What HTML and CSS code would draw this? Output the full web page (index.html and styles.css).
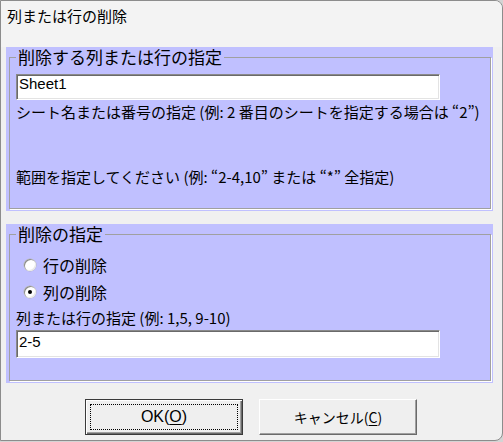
FILE: index.html
```html
<!DOCTYPE html>
<html lang="ja">
<head>
<meta charset="utf-8">
<title>列または行の削除</title>
<link rel="stylesheet" href="styles.css">
</head>
<body>
<div class="window">
  <div class="titlebar">列または行の削除</div>
  <div class="client">
    <div class="group g1">
      <fieldset class="frame">
        <legend>削除する列または行の指定</legend>
        <div class="input in1">Sheet1</div>
        <p class="note n1">シート名または番号の指定 (例: 2 番目のシートを指定する場合は “2”)</p>
        <p class="note n2">範囲を指定してください (例: “2-4,10” または “*” 全指定)</p>
      </fieldset>
    </div>
    <div class="group g2">
      <fieldset class="frame">
        <legend>削除の指定</legend>
        <div class="radio-row r1"><span class="radio"></span><span class="rlabel">行の削除</span></div>
        <div class="radio-row r2"><span class="radio checked"></span><span class="rlabel">列の削除</span></div>
        <p class="note n3">列または行の指定 (例: 1,5, 9-10)</p>
        <div class="input in2">2-5</div>
      </fieldset>
    </div>
    <div class="buttons">
      <div class="btn default"><span class="focus">OK(<u>O</u>)</span></div>
      <div class="btn"><span class="cap">キャンセル(<u>C</u>)</span></div>
    </div>
  </div>
</div>
</body>
</html>
```
FILE: styles.css
```css
html, body {
  margin: 0;
  padding: 0;
}
body {
  width: 503px;
  height: 442px;
  background: #d4d4d4;
  font-family: "Liberation Sans", "Noto Sans CJK JP", sans-serif;
  color: #000;
  overflow: hidden;
}
.window {
  box-sizing: border-box;
  width: 503px;
  height: 441px;
  background: #f0f0f0;
  border: 1px solid #8c8c8c;
  border-radius: 0 8px 8px 0;
  overflow: hidden;
}
.titlebar {
  box-sizing: border-box;
  height: 46px;
  padding: 5px 0 0 6px;
  font-size: 15px;
  line-height: 20px;
  font-family: "Noto Sans CJK JP", sans-serif;
  background: #f3f3f3;
}
.client {
  padding: 0 0 0 5px;
}
.group {
  width: 487px;
  box-sizing: border-box;
  background: #c0c0ff;
  padding: 0 2px 2px 3px;
}
.g2 {
  margin-top: 13px;
}
.frame {
  margin: 0;
  border: 1px solid #a0a0a0;
  box-shadow: 1px 1px 0 #ffffff;
  padding: 7px 6px 22px 6px;
  min-inline-size: 0;
}
.g2 .frame {
  padding-top: 11px;
}
.frame legend {
  padding: 0 2px;
  font-size: 17px;
  line-height: 20px;
  font-family: "Noto Sans CJK JP", sans-serif;
}
.input {
  box-sizing: border-box;
  width: 424px;
  background: #fff;
  border: 1px solid;
  border-color: #8a8a8a #ffffff #ffffff #8a8a8a;
  box-shadow: inset 1px 1px 0 #6a6a6a, inset -1px -1px 0 #e3e3e3;
  font-size: 15px;
  line-height: 18px;
  padding: 0 0 0 2px;
}
.in1 {
  height: 26px;
}
.in2 {
  height: 28px;
  margin-top: 3px;
  padding-top: 2px;
}
.note {
  margin: 0;
  font-family: "Noto Sans CJK JP", sans-serif;
  font-size: 15px;
  line-height: 18px;
  white-space: nowrap;
}
.n1 {
  margin-top: 3px;
}
.n2 {
  margin-top: 47px;
}
.n3 {
  margin-top: 7px;
}
.radio-row {
  display: flex;
  align-items: center;
  height: 20px;
  padding-left: 8px;
  gap: 7px;
}
.r2 {
  margin-top: 7px;
}
.rlabel {
  font-size: 16px;
  line-height: 20px;
  font-family: "Noto Sans CJK JP", sans-serif;
}
.radio {
  width: 12px;
  height: 12px;
  border-radius: 50%;
  background: #fff;
  box-shadow: inset 1px 1px 0 #8a8a8a, inset -1px -1px 0 #e8e8e8, 0 0 0 0.5px #b8b8b8;
  display: flex;
  align-items: center;
  justify-content: center;
}
.radio.checked::after {
  content: "";
  width: 4px;
  height: 4px;
  border-radius: 50%;
  background: #000;
}
.buttons {
  display: flex;
  justify-content: center;
  gap: 16px;
  margin-top: 16px;
  padding-right: 6px;
}
.btn {
  box-sizing: border-box;
  width: 158px;
  height: 36px;
  background: #efefef;
  border: 1px solid;
  border-color: #ffffff #6a6a6a #6a6a6a #ffffff;
  box-shadow: inset -1px -1px 0 #a0a0a0;
  display: flex;
  align-items: center;
  justify-content: center;
  font-size: 14px;
  font-family: "Noto Sans CJK JP", sans-serif;
}
.btn.default {
  border: 1px solid #3a3a3a;
  box-shadow: inset 1px 1px 0 #fff, inset -1px -1px 0 #6a6a6a, inset -2px -2px 0 #a0a0a0;
  padding: 4px;
}
.focus {
  flex: 1;
  align-self: stretch;
  display: flex;
  align-items: center;
  justify-content: center;
  border: 1px dotted #000;
  font-family: "Liberation Sans", sans-serif;
  font-size: 16px;
}
.btn u {
  text-underline-offset: 2px;
}
```
